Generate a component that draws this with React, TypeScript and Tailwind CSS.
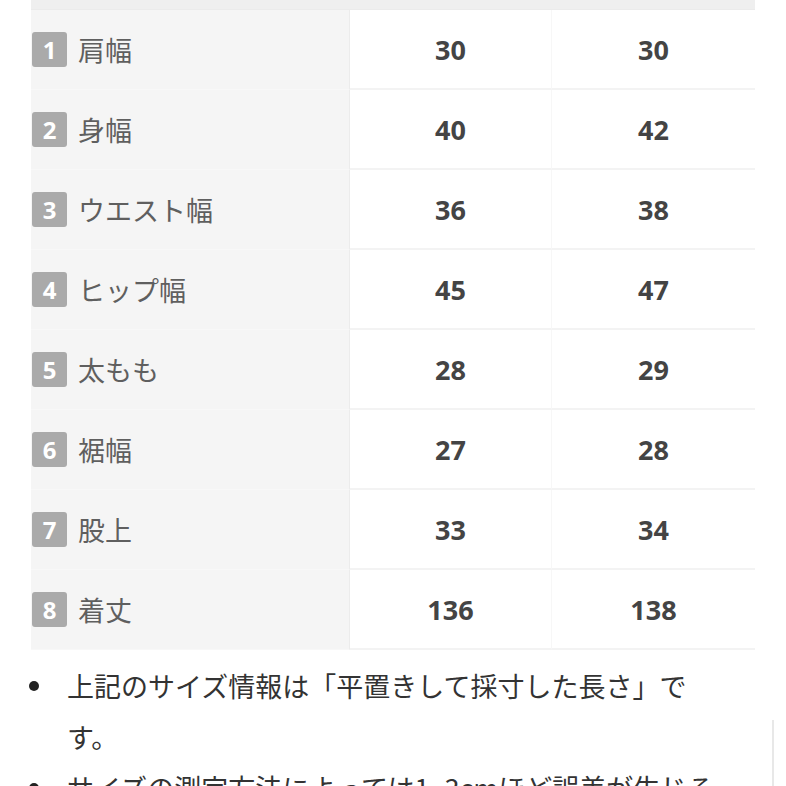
import React from "react";

interface SizeRow {
  no: number;
  label: string;
  a: string;
  b: string;
}

const rows: SizeRow[] = [
  { no: 1, label: "肩幅", a: "30", b: "30" },
  { no: 2, label: "身幅", a: "40", b: "42" },
  { no: 3, label: "ウエスト幅", a: "36", b: "38" },
  { no: 4, label: "ヒップ幅", a: "45", b: "47" },
  { no: 5, label: "太もも", a: "28", b: "29" },
  { no: 6, label: "裾幅", a: "27", b: "28" },
  { no: 7, label: "股上", a: "33", b: "34" },
  { no: 8, label: "着丈", a: "136", b: "138" },
];

const notes = [
  "上記のサイズ情報は「平置きして採寸した長さ」です。",
  "サイズの測定方法によっては1~3cmほど誤差が生じる場合がございます。",
];

export default function App() {
  return (
    <div className="relative w-[786px] h-[786px] overflow-hidden bg-white font-['Noto_Sans_CJK_JP','Noto_Sans',sans-serif]">
      {/* size table */}
      <div className="ml-[31px] w-[724px]">
        <div className="h-[10px] bg-[#efefef] border-b border-[#ebebeb]" />
        {rows.map((r) => (
          <div key={r.no} className="grid grid-cols-[319px_202px_203px] h-[80px]">
            <div className="flex items-center gap-[11px] pl-[1px] bg-[#f5f5f5] border-b border-[#f8f8f8] border-r border-r-[#ececec]">
              <span className="flex items-center justify-center w-[35px] h-[35px] rounded-[3px] bg-[#aaaaaa] text-white text-[24px] font-bold font-['Noto_Sans',sans-serif] leading-none">
                {r.no}
              </span>
              <span className="text-[27px] text-[#5f5f5f] leading-none">{r.label}</span>
            </div>
            <div className="flex items-center justify-center border-b-2 border-[#f3f3f3] border-r border-r-[#f7f7f7]">
              <span className="text-[27px] font-bold text-[#444] font-['Noto_Sans',sans-serif] leading-none">{r.a}</span>
            </div>
            <div className="flex items-center justify-center border-b-2 border-[#f3f3f3]">
              <span className="text-[27px] font-bold text-[#444] font-['Noto_Sans',sans-serif] leading-none">{r.b}</span>
            </div>
          </div>
        ))}
      </div>

      {/* notes */}
      <ul className="mt-[10px] pl-[29px] pr-[70px]">
        {notes.map((n, i) => (
          <li key={i} className="flex text-[27px] leading-[51px] text-[#333]">
            <span className="flex-shrink-0 w-[38px] h-[51px] flex items-center">
              <span className="w-[10px] h-[10px] rounded-full bg-[#222]" />
            </span>
            <span>{n}</span>
          </li>
        ))}
      </ul>

      {/* faint divider on the right edge */}
      <div className="absolute left-[772px] top-[720px] w-[2px] h-[66px] bg-[#e8e8e8]" />
    </div>
  );
}
